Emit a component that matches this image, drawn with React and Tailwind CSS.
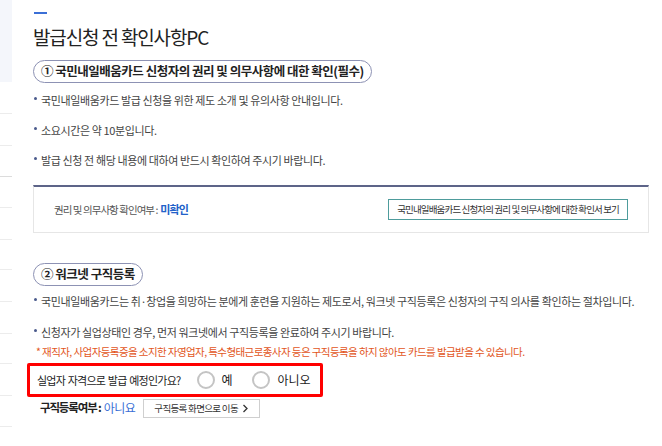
import React from 'react';

const FONT = { fontFamily: '"Noto Sans CJK KR", "Noto Sans", sans-serif' };

const sideRows = [32, 31, 32, 32, 31, 32, 32, 31, 32, 32, 20];

const Bullet = ({ children }) => (
  <li className="flex items-center h-[20px] whitespace-nowrap text-[11px] text-[#444] tracking-[-0.035em]">
    <span className="w-[3px] h-[3px] rounded-full bg-[#4a5a8c] mr-[4px] ml-[1px] -mt-[4px]" />
    {children}
  </li>
);

const Pill = ({ children, className = '' }) => (
  <div className={`inline-flex items-center h-[23px] px-[7px] rounded-full border border-[#8d92b4] text-[12.5px] font-bold text-[#222] tracking-[-0.04em] whitespace-nowrap ${className}`}>
    {children}
  </div>
);

const Radio = ({ label, gap }) => (
  <label className="flex items-center whitespace-nowrap">
    <span className="w-[18px] h-[18px] rounded-full border-2 border-[#c4c4c4] bg-white" />
    <span className={`${gap} text-[12px] text-[#222]`}>{label}</span>
  </label>
);

export default function App() {
  return (
    <div className="flex w-[662px] h-[446px] bg-white overflow-hidden" style={FONT}>
      {/* side menu fragment */}
      <div className="w-[12px] shrink-0 flex flex-col">
        <div className="h-[83px] bg-[#f4f6fb]" />
        <div className="h-[32px]" />
        {sideRows.map((h, i) => (
          <div
            key={i}
            className={`border-t ${i === 2 ? 'border-[#dcdcdc]' : 'border-[#ececec]'}`}
            style={{ height: h }}
          />
        ))}
      </div>

      <div className="flex-1 pl-[21px] pr-[13px]">
        <div className="mt-[12px] ml-[1px] w-[13px] h-[2px] bg-[#3b6fd6]" />
        <h1 className="mt-[10px] text-[19px] leading-[26px] text-[#222] tracking-[-0.06em]">
          발급신청 전 확인사항PC
        </h1>

        {/* section 1 */}
        <Pill className="mt-[10px]">① 국민내일배움카드 신청자의 권리 및 의무사항에 대한 확인(필수)</Pill>
        <ul className="mt-[7px] flex flex-col gap-[10px]">
          <Bullet>국민내일배움카드 발급 신청을 위한 제도 소개 및 유의사항 안내입니다.</Bullet>
          <Bullet>소요시간은 약 10분입니다.</Bullet>
          <Bullet>발급 신청 전 해당 내용에 대하여 반드시 확인하여 주시기 바랍니다.</Bullet>
        </ul>

        <div className="mt-[15px] h-[48px] border border-[#e6e6e6] border-t-2 border-t-[#5d6488] flex items-center justify-between pl-[20px] pr-[20px]">
          <p className="text-[10.5px] text-[#555] tracking-[-0.09em] whitespace-nowrap">
            권리 및 의무사항 확인여부 :&nbsp; <span className="font-bold text-[#2161c9] text-[11px]">미확인</span>
          </p>
          <button className="h-[21px] px-[8px] border-[1.5px] border-[#4e9c9c] bg-white text-[9.5px] text-[#333] tracking-[-0.09em] whitespace-nowrap">
            국민내일배움카드 신청자의 권리 및 의무사항에 대한 확인서 보기
          </button>
        </div>

        {/* section 2 */}
        <Pill className="mt-[30px]">② 워크넷 구직등록</Pill>
        <ul className="mt-[5px] flex flex-col gap-[11px]">
          <Bullet>국민내일배움카드는 취·창업을 희망하는 분에게 훈련을 지원하는 제도로서, 워크넷 구직등록은 신청자의 구직 의사를 확인하는 절차입니다.</Bullet>
          <Bullet>신청자가 실업상태인 경우, 먼저 워크넷에서 구직등록을 완료하여 주시기 바랍니다.</Bullet>
        </ul>
        <p className="mt-[2px] ml-[3px] text-[10.5px] leading-[16px] text-[#e2561c] tracking-[-0.055em] whitespace-nowrap">
          * 재직자, 사업자등록증을 소지한 자영업자, 특수형태근로종사자 등은 구직등록을 하지 않아도 카드를 발급받을 수 있습니다.
        </p>

        <div className="mt-[3px] -ml-[6px] w-[296px] h-[34px] border-[3px] border-[#ff0000] rounded-[2px] flex items-center pl-[7px]">
          <span className="text-[11px] text-[#222] tracking-[-0.07em] [word-spacing:1px] whitespace-nowrap">실업자 자격으로 발급 예정인가요?</span>
          <div className="ml-[17px] flex items-center gap-[20px]">
            <Radio label="예" gap="ml-[6px]" />
            <Radio label="아니오" gap="ml-[7px]" />
          </div>
        </div>

        <div className="mt-[1px] ml-[7px] flex items-center h-[20px] whitespace-nowrap">
          <span className="text-[11.5px] font-bold text-[#222] tracking-[-0.1em]">구직등록여부 : </span>
          <span className="ml-[3px] text-[12px] text-[#3a6fd6] tracking-[-0.04em]">아니요</span>
          <button className="ml-[8px] h-[19px] px-[10px] border border-[#cfcfcf] bg-white text-[9.5px] text-[#333] tracking-[-0.07em] flex items-center">
            구직등록 화면으로 이동
            <svg width="7" height="9" viewBox="0 0 7 9" className="ml-[4px]">
              <path d="M1.5 1 L5 4.5 L1.5 8" fill="none" stroke="#333" strokeWidth="1.3" />
            </svg>
          </button>
        </div>
      </div>
    </div>
  );
}
